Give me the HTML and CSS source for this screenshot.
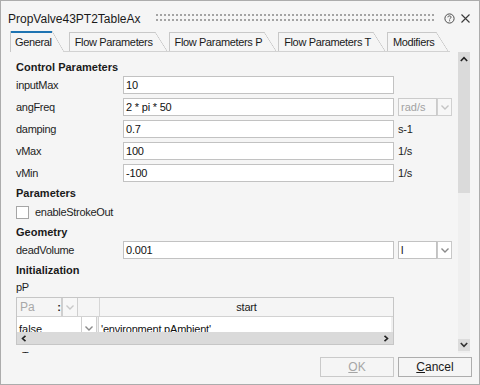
FILE: index.html
```html
<!DOCTYPE html>
<html>
<head>
<meta charset="utf-8">
<link rel="stylesheet" href="styles.css">
</head>
<body>
<div class="window">
  <div class="titlebar">
    <span class="title">PropValve43PT2TableAx</span>
    <div class="grip"></div>
    <svg class="help" width="11" height="11" viewBox="0 0 11 11"><circle cx="5.5" cy="5.5" r="4.6" fill="none" stroke="#4a4a4a" stroke-width="1"/><path d="M3.9 4.3 C3.9 3.3 4.6 2.9 5.5 2.9 C6.4 2.9 7.1 3.4 7.1 4.2 C7.1 5.2 5.6 5.3 5.6 6.4" fill="none" stroke="#4a4a4a" stroke-width="1"/><rect x="5.1" y="7.3" width="1" height="1" fill="#4a4a4a"/></svg>
    <svg class="close" width="9" height="9" viewBox="0 0 9 9"><path d="M0.5 0.5 L8.5 8.5 M8.5 0.5 L0.5 8.5" stroke="#3a3a3a" stroke-width="1.1"/></svg>
  </div>
  <div class="tabs">
    <div class="tab active">General</div>
    <div class="tab">Flow Parameters</div>
    <div class="tab">Flow Parameters P</div>
    <div class="tab">Flow Parameters T</div>
    <div class="tab">Modifiers</div>
  </div>
  <div class="main">
    <div class="content">
      <div class="heading first">Control Parameters</div>
      <div class="row"><span class="label">inputMax</span><span class="input">10</span></div>
      <div class="row"><span class="label">angFreq</span><span class="input">2 * pi * 50</span><span class="combo disabled"><span class="combo-text">rad/s</span><span class="combo-btn"><svg width="8" height="5" viewBox="0 0 8 5"><path d="M0.5 0.5 L4 4 L7.5 0.5" fill="none" stroke="#c4c4c4" stroke-width="1.4"/></svg></span></span></div>
      <div class="row"><span class="label">damping</span><span class="input">0.7</span><span class="unit">s-1</span></div>
      <div class="row"><span class="label">vMax</span><span class="input">100</span><span class="unit">1/s</span></div>
      <div class="row"><span class="label">vMin</span><span class="input">-100</span><span class="unit">1/s</span></div>
      <div class="heading h-params">Parameters</div>
      <div class="checkrow"><span class="checkbox"></span><span class="label">enableStrokeOut</span></div>
      <div class="heading h-geom">Geometry</div>
      <div class="row"><span class="label">deadVolume</span><span class="input">0.001</span><span class="combo"><span class="combo-text">l</span><span class="combo-btn"><svg width="8" height="5" viewBox="0 0 8 5"><path d="M0.5 0.5 L4 4 L7.5 0.5" fill="none" stroke="#8a8a8a" stroke-width="1.4"/></svg></span></span></div>
      <div class="heading h-init">Initialization</div>
      <div class="plain-label">pP</div>
      <div class="table">
        <div class="thead">
          <div class="th th-unit"><span class="gray">Pa</span><span class="split">:</span></div>
          <div class="th th-arrow"><svg width="8" height="5" viewBox="0 0 8 5"><path d="M0.5 0.5 L4 4 L7.5 0.5" fill="none" stroke="#c8c8c8" stroke-width="1.4"/></svg></div>
          <div class="th th-empty"></div>
          <div class="th th-start">start</div>
        </div>
        <div class="tbody">
          <div class="trow">
            <div class="td td-false">false</div>
            <div class="td td-arrow"><svg width="8" height="5" viewBox="0 0 8 5"><path d="M0.5 0.5 L4 4 L7.5 0.5" fill="none" stroke="#8a8a8a" stroke-width="1.4"/></svg></div>
            <div class="td td-value">'environment.pAmbient'</div>
          </div>
        </div>
        <div class="hscroll">
          <svg width="6" height="7" viewBox="0 0 6 7"><path d="M4.5 0.8 L1.5 3.5 L4.5 6.2" fill="none" stroke="#222" stroke-width="1.6"/></svg>
          <svg width="6" height="7" viewBox="0 0 6 7"><path d="M1.5 0.8 L4.5 3.5 L1.5 6.2" fill="none" stroke="#222" stroke-width="1.6"/></svg>
        </div>
      </div>
      <div class="plain-label t-label">T</div>
    </div>
    <div class="vscroll">
      <div class="thumb"><svg width="8" height="6" viewBox="0 0 8 6"><path d="M0.8 5 L4 1.6 L7.2 5" fill="none" stroke="#222" stroke-width="1.6"/></svg></div>
      <div class="track"></div>
      <div class="down"><svg width="8" height="6" viewBox="0 0 8 6"><path d="M0.8 1 L4 4.4 L7.2 1" fill="none" stroke="#333" stroke-width="1.6"/></svg></div>
    </div>
  </div>
  <div class="buttons">
    <div class="btn disabled"><span class="u">O</span>K</div>
    <div class="btn"><span class="u">C</span>ancel</div>
  </div>
</div>
</body>
</html>
```

FILE: styles.css
```css
* { box-sizing: border-box; }
html, body { margin: 0; padding: 0; }
body {
  font-family: "Liberation Sans", Arial, sans-serif;
  font-size: 11px;
  color: #1e1e1e;
  background: #f5f5f5;
}
.window {
  width: 480px;
  height: 385px;
  border: 1px solid #acacac;
  background: #f5f5f5;
  display: flex;
  flex-direction: column;
  overflow: hidden;
}
.titlebar {
  height: 30px;
  flex: none;
  display: flex;
  align-items: center;
  padding: 5px 9px 0 7px;
}
.title { font-size: 12px; color: #1a1a1a; }
.grip {
  flex: 1;
  height: 9px;
  margin: 0 9px 0 15px;
  background-image: radial-gradient(circle at 1px 1px, #a4a4a4 0.8px, transparent 1.1px);
  background-size: 4px 5px;
}
.help { margin-right: 6px; }
.tabs {
  flex: none;
  height: 21px;
  display: flex;
  align-items: flex-end;
  align-self: flex-start;
  margin-left: 9px;
  border-bottom: 1px solid #d2d2d2;
}
.tab {
  position: relative;
  height: 19px;
  padding: 0 14px 0 5px;
  margin-right: 2px;
  display: flex;
  align-items: center;
  border-left: 1px solid #c8c8c8;
  color: #1a1a1a;
  letter-spacing: -0.35px;
}
.tab::before {
  content: "";
  position: absolute;
  left: 0;
  top: 0;
  right: 12px;
  height: 1px;
  background: #c8c8c8;
}
.tab::after {
  content: "";
  position: absolute;
  right: 0;
  top: 0;
  width: 12px;
  height: 100%;
  background: linear-gradient(to top right, transparent calc(50% - 0.6px), #c4c4c4 50%, transparent calc(50% + 0.6px));
}
.tab.active {
  height: 21px;
  padding: 1px 12px 0 4px;
  margin-right: 5px;
  margin-bottom: -1px;
  background: #f5f5f5;
}
.tab.active::before { height: 2px; background: #1f74b2; }
.main {
  flex: none;
  height: 301px;
  margin-left: 9px;
  width: 460px;
  display: flex;
}
.content {
  flex: 1;
  overflow: hidden;
  padding-left: 6px;
}
.heading {
  font-weight: bold;
  color: #1a1a1a;
  display: flex;
  align-items: center;
}
.heading.first { height: 24px; padding-top: 5px; }
.heading.h-params { height: 14px; }
.heading.h-geom { height: 17px; padding-bottom: 2px; }
.heading.h-init { height: 14px; }
.row {
  height: 18px;
  margin-bottom: 4px;
  display: flex;
  align-items: center;
}
.label {
  width: 107px;
  flex: none;
  letter-spacing: -0.3px;
  color: #1e1e1e;
}
.input {
  width: 271px;
  height: 18px;
  flex: none;
  background: #fff;
  border: 1px solid #c2c2c2;
  padding-left: 2px;
  display: flex;
  align-items: center;
  color: #111;
  letter-spacing: -0.2px;
}
.unit { margin-left: 4px; color: #1e1e1e; letter-spacing: -0.2px; }
.combo { margin-left: 4px; display: flex; height: 18px; }
.combo-text {
  width: 39px;
  border: 1px solid #c2c2c2;
  background: #fff;
  padding-left: 2px;
  display: flex;
  align-items: center;
  color: #111;
}
.combo-btn {
  width: 15px;
  border: 1px solid #c8c8c8;
  background: #fff;
  display: flex;
  align-items: center;
  justify-content: center;
}
.combo.disabled .combo-text { background: #f7f7f7; color: #a2a2a2; border-color: #cbcbcb; }
.combo.disabled .combo-btn { background: #f7f7f7; border-color: #d0d0d0; }
.checkrow {
  height: 24px;
  display: flex;
  align-items: center;
}
.checkbox {
  width: 13px;
  height: 13px;
  border: 1px solid #a6a6a6;
  background: #fff;
  margin-right: 6px;
}
.checkrow .label { width: auto; }
.plain-label {
  height: 20px;
  display: flex;
  align-items: center;
  letter-spacing: -0.3px;
}
.table {
  width: 378px;
  border: 1px solid #c6c6c6;
  background: #f5f5f5;
}
.thead {
  height: 19px;
  display: flex;
  border-bottom: 1px solid #d2d2d2;
}
.th {
  display: flex;
  align-items: center;
  border-right: 1px solid #d6d6d6;
}
.th-unit { width: 45px; padding-left: 3px; justify-content: space-between; border-right: 1px solid #cfcfcf; }
.gray { color: #a8a8a8; font-size: 12px; }
.split { color: #222; font-weight: bold; margin-right: 0; line-height: 1; }
.th-arrow { width: 16px; justify-content: center; border-left: 1px solid #cfcfcf; border-right: 1px solid #cfcfcf; background: #f7f7f7; }
.th-empty { width: 22px; }
.th-start { flex: 1; justify-content: center; border-right: none; color: #1a1a1a; letter-spacing: -0.2px; }
.tbody {
  height: 15px;
  overflow: hidden;
}
.trow {
  height: 20px;
  display: flex;
  background: #f0f0f0;
}
.td {
  display: flex;
  align-items: center;
  background: #fff;
  padding-top: 3px;
}
.td-false { width: 65px; padding-left: 2px; border-right: 1px solid #cfcfcf; color: #111; }
.td-arrow { width: 15px; justify-content: center; border-right: 1px solid #cfcfcf; margin-right: 1px; }
.td-value { flex: 1; padding-left: 2px; margin-right: 2px; border-left: 1px solid #d4d4d4; color: #111; letter-spacing: -0.2px; }
.hscroll {
  height: 12px;
  background: #dadada;
  display: flex;
  align-items: center;
  justify-content: space-between;
  padding: 0 4px 0 4px;
}
.t-label { padding-left: 6px; margin-top: 1px; }
.vscroll {
  width: 12px;
  flex: none;
  display: flex;
  flex-direction: column;
  background: #efefef;
}
.thumb {
  height: 141px;
  background: #dadada;
  display: flex;
  justify-content: center;
  padding-top: 4px;
}
.track { flex: 1; }
.down {
  height: 12px;
  margin-bottom: 2px;
  background: #dcdcdc;
  display: flex;
  justify-content: center;
  align-items: center;
}
.buttons {
  flex: none;
  display: flex;
  justify-content: flex-end;
  gap: 4px;
  padding: 4px 7px 0 0;
}
.btn {
  width: 74px;
  height: 20px;
  border: 1px solid #adadad;
  background: #f5f5f5;
  display: flex;
  align-items: center;
  justify-content: center;
  font-size: 12px;
  color: #1a1a1a;
}
.btn.disabled { border-color: #cacaca; color: #a6a6a6; }
.u { text-decoration: underline; }
```
